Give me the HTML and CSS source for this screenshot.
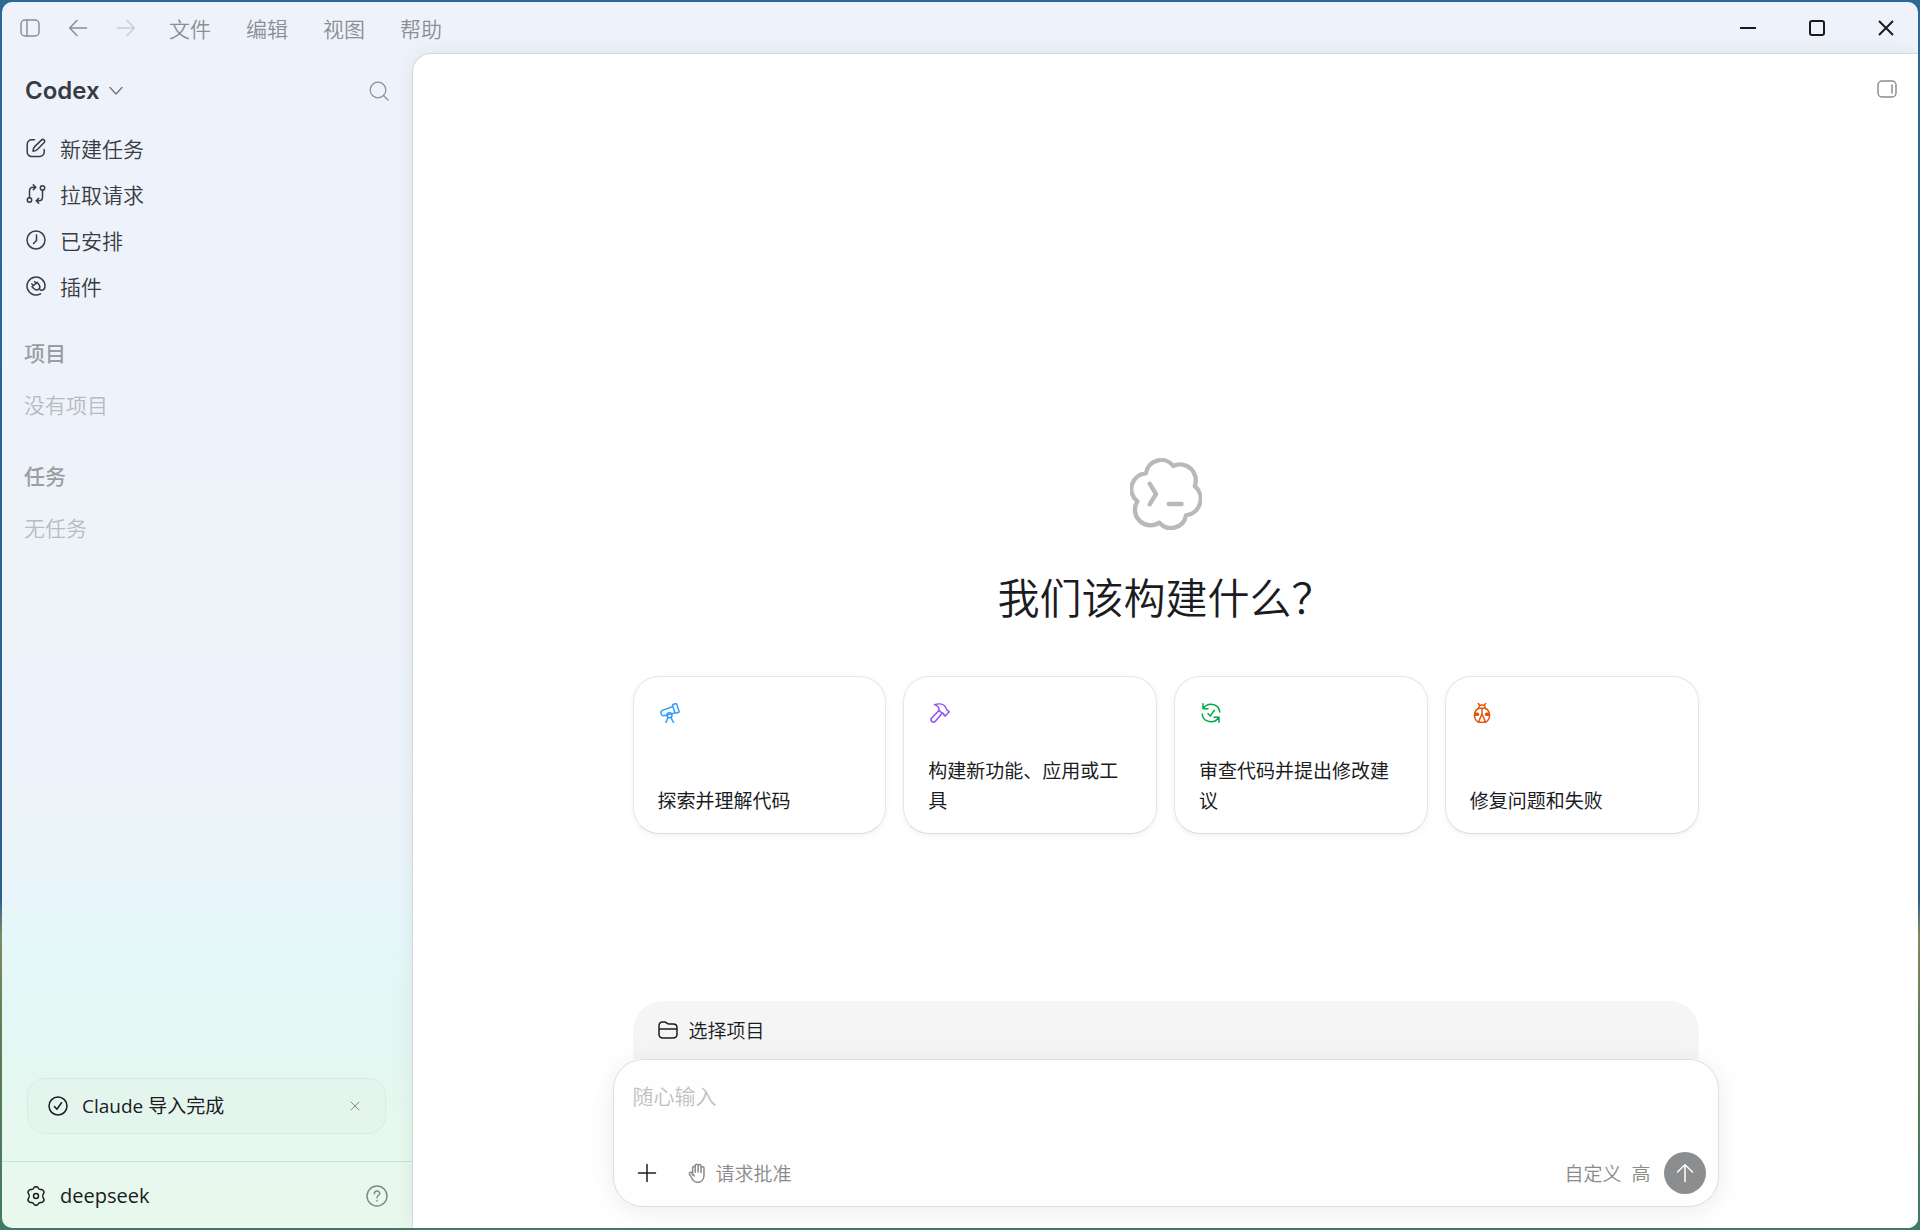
FILE: index.html
```html
<!DOCTYPE html>
<html lang="zh-CN">
<head>
    <meta charset="UTF-8">
    <meta name="viewport" content="width=device-width, initial-scale=1.0">
    <title>Codex</title>
    <link rel="stylesheet" href="styles.css">
</head>
<body>
<div class="window">

    <header class="titlebar">
        <button class="icon-btn" aria-label="切换边栏">
            <svg class="icon" viewBox="0 0 20 20"><rect x="1" y="2" width="18" height="16" rx="4"/><path d="M7 2v16"/></svg>
        </button>
        <button class="icon-btn" aria-label="后退">
            <svg class="icon" viewBox="0 0 20 20"><path d="M18.500 10H2M9 2.500 1.700 10 9 17.500"/></svg>
        </button>
        <button class="icon-btn faded" aria-label="前进">
            <svg class="icon" viewBox="0 0 20 20"><path d="M1.500 10H18M11 2.500 18.300 10 11 17.500"/></svg>
        </button>
        <nav class="menu">
            <button>文件</button>
            <button>编辑</button>
            <button>视图</button>
            <button>帮助</button>
        </nav>
        <div class="window-controls">
            <button aria-label="最小化"><svg viewBox="0 0 16 16"><path d="M0 8h16"/></svg></button>
            <button aria-label="最大化"><svg viewBox="0 0 16 16"><rect x="1" y="1" width="14" height="14" rx="2"/></svg></button>
            <button aria-label="关闭"><svg viewBox="0 0 16 16"><path d="M1 1l14 14M15 1 1 15"/></svg></button>
        </div>
    </header>

    <div class="body">
        <aside class="sidebar">
            <div class="brand-row">
                <button class="brand">Codex
                    <svg class="chevron" viewBox="0 0 14 10"><path d="M1 1.500 7 8l6-6.500"/></svg>
                </button>
                <button class="icon-btn search" aria-label="搜索">
                    <svg class="icon thin" viewBox="0 0 20 20"><circle cx="9" cy="9" r="7.800"/><path d="m14.500 14.500 4.500 4.500"/></svg>
                </button>
            </div>

            <nav class="nav">
                <a href="#">
                    <svg class="icon" viewBox="0 0 20 20"><path d="M8.500 1.800H6A4.500 4.500 0 0 0 1.200 6.300V14A4.500 4.500 0 0 0 5.700 18.600H13.500A4.500 4.500 0 0 0 18.200 14V11.500"/><path d="M7 13.200c0-2 .5-3.400 1.700-4.600L15.600 1.900c1.700-1.500 4 .7 2.600 2.500L11.600 11.300C10.300 12.600 9 13.200 7 13.200z"/></svg>
                    新建任务
                </a>
                <a href="#">
                    <svg class="icon" viewBox="0 0 20 20"><circle cx="3.500" cy="16" r="2.200"/><circle cx="16.500" cy="4" r="2.200"/><path d="M3.500 13.800V7c0-2.300 1.200-3.800 3.500-3.800h2.500M7.300.8l2.500 2.400-2.500 2.400M16.500 6.200V13c0 2.300-1.200 3.800-3.500 3.800h-2.500M12.700 14.400l-2.500 2.400 2.500 2.400"/></svg>
                    拉取请求
                </a>
                <a href="#">
                    <svg class="icon" viewBox="0 0 20 20"><circle cx="10" cy="10" r="9"/><path d="M10.500 5v5.500l-3 3"/></svg>
                    已安排
                </a>
                <a href="#">
                    <svg class="icon" viewBox="0 0 20 20"><path d="M14.500 17.800A9 9 0 1 1 19 10c0 4.800-4.500 5.400-5.600 2.600"/><path d="M6 10.800 11.200 6.400l2 2.600c1.700 2.300-.4 5.600-3.400 4.800C8.300 13.400 7.200 12.200 6 10.800zM7.300 9.600 5.900 7.900M10 7.400 8.700 5.700"/></svg>
                    插件
                </a>
            </nav>

            <section class="group">
                <h2>项目</h2>
                <p>没有项目</p>
            </section>
            <section class="group">
                <h2>任务</h2>
                <p>无任务</p>
            </section>

            <div class="toast">
                <svg class="icon" viewBox="0 0 20 20"><circle cx="10" cy="10" r="9"/><path d="m6.500 10.500 2.400 2.700 4.600-6.500"/></svg>
                <span>Claude 导入完成</span>
                <button class="toast-close" aria-label="关闭通知">
                    <svg viewBox="0 0 10 10"><path d="M1 1l8 8M9 1 1 9"/></svg>
                </button>
            </div>

            <footer class="account">
                <a href="#">
                    <svg class="icon" viewBox="0 0 20 20"><path d="M7.600 2.200c.9-2 3.900-2 4.800 0 .4.900 1.300 1.400 2.300 1.300 2.500-.3 4.200 2.300 2.700 4.400-.8 1-.8 3.200 0 4.200 1.500 2.100-.2 4.700-2.700 4.400-1-.1-1.900.4-2.300 1.300-.9 2-3.900 2-4.800 0-.4-.9-1.300-1.400-2.300-1.300-2.500.3-4.200-2.300-2.700-4.400.8-1 .8-3.200 0-4.200C1.100 5.800 2.800 3.200 5.300 3.500c1 .1 1.900-.4 2.300-1.300z"/><circle cx="10" cy="10" r="2.500"/></svg>
                    deepseek
                </a>
                <button class="icon-btn help" aria-label="帮助">
                    <svg class="icon" viewBox="0 0 22 22"><circle cx="11" cy="11" r="10"/><path d="M8.300 8.700c0-3.500 5.400-3.500 5.400-.2 0 2-2.700 2-2.700 4.200"/><path d="M11 15.400v.6"/></svg>
                </button>
            </footer>
        </aside>

        <main class="main">
            <div class="main-top">
                <button class="icon-btn" aria-label="切换侧面板">
                    <svg class="icon" viewBox="0 0 20 20"><rect x="1" y="2" width="18" height="16" rx="4"/><path d="M15 6v8"/></svg>
                </button>
            </div>

            <div class="hero">
                <svg class="logo" viewBox="0 0 216 216">
                    <path d="M48 46A46 46 0 0 1 130 24 47 47 0 0 1 194 84 50 50 0 0 1 168 172 46 46 0 0 1 88 194 47 47 0 0 1 22 130 47 47 0 0 1 48 46z"/>
                    <path class="prompt" d="m59 77 19 31-19 31M116 138h39"/>
                </svg>
                <h1>我们该构建什么？</h1>
                <div class="cards">
                    <button class="card">
                        <svg class="icon blue" viewBox="0 0 20 20"><path d="M12.300 3.700 2.400 7.400C.9 8 .6 9 1.100 10.600c.6 1.900 1.400 2.500 3 2.100L14.500 10M13.700 1.200l1.700-.5c.7-.2 1.200.1 1.400.7l2.200 6.800c.2.700-.1 1.200-.7 1.400l-2 .5c-.7.2-1.200-.1-1.400-.7L12.600 2.800c-.3-.8.300-1.300 1.100-1.600z"/><circle cx="9.500" cy="12.300" r="2.500"/><path d="m8 14.600-2.200 4.900M11 14.600l2.500 4.900"/></svg>
                        <span>探索并理解代码</span>
                    </button>
                    <button class="card">
                        <svg class="icon purple" viewBox="0 0 20 20"><path d="M4.500 1.600C9 .2 14.500.6 16.200 5.600c.3 1 .7 1.800 1.500 1.700l1.500 1.400-4 4.400-1.500-1.500c.2-1.200-.4-1.600-1.700-1.500L9 7.400c.3-2.700-1.500-4.800-4.500-5.800z"/><path d="M9 7.400 1.700 15c-2 2.400 1 5.500 3.400 3.400L12 10.600"/></svg>
                        <span>构建新功能、应用或工具</span>
                    </button>
                    <button class="card">
                        <svg class="icon green" viewBox="0 0 20 20"><path d="M2 .8v5h5M2.300 5.500C6.500-1 17.800 0 18.800 9M18 19.200v-5h-5M17.700 14.500C13.500 21 2.200 20 1.200 11"/><path d="m7 10.500 2.300 2.600 4-5.800"/></svg>
                        <span>审查代码并提出修改建议</span>
                    </button>
                    <button class="card">
                        <svg class="icon orange" viewBox="0 0 20 20"><path d="M7 5.200C2.600 6.600 1.500 12 3.300 16c.7 1.500 1.700 2.600 3 3.200L10 11l3.700 8.200c1.300-.6 2.300-1.700 3-3.200C18.500 12 17.400 6.600 13 5.200M6.500 5.200h7M10 5.200V11M6.800 5c-.3-4 6.700-4 6.400 0M7.500 2 6.300.4M12.500 2 13.700.4M6.500 18.800c2 .9 5 .9 7 0"/><path class="spot" d="M3 9.500h2.500a1.800 1.800 0 0 1 0 3.600H2.600zM17 9.500h-2.500a1.800 1.800 0 0 0 0 3.600h2.900z"/></svg>
                        <span>修复问题和失败</span>
                    </button>
                </div>
            </div>

            <div class="composer-wrap">
                <button class="project-bar">
                    <svg class="icon" viewBox="0 0 20 20"><path d="M1 6c0-2.600 1-4 3.600-4h1.700c1.500 0 2 .6 2.800 1.300.5.500 1 .7 1.800.7h4.300C18 4 19 5.300 19 7.500V14c0 2.800-1.200 4-4 4H5c-2.800 0-4-1.200-4-4zM1 9h18"/></svg>
                    选择项目
                </button>
                <form class="composer">
                    <textarea rows="1" aria-label="随心输入" placeholder="随心输入"></textarea>
                    <div class="composer-actions">
                        <button type="button" class="add" aria-label="添加">
                            <svg class="icon" viewBox="0 0 20 20"><path d="M10 1.500v17M1.500 10h17"/></svg>
                        </button>
                        <button type="button" class="approval">
                            <svg class="icon" viewBox="0 0 20 20"><path d="M4.600 12V4.700c0-1.700 2.600-1.700 2.600 0V9.200M7.200 5V2.600c0-1.900 2.900-1.900 2.900 0V9M10.100 3c0-1.900 2.900-1.900 2.900 0v6.500M13 5c0-1.800 3-1.800 3 0v7c0 4.600-2.600 7.300-6 7.300-3.300 0-4.900-1.300-6.300-4.300L1.700 11.300c-.8-1.500.9-2.900 2.200-1.400l2.300 3"/></svg>
                            请求批准
                        </button>
                        <button type="button" class="model"><span>自定义</span><span>高</span></button>
                        <button type="submit" class="send" aria-label="发送">
                            <svg class="icon" viewBox="0 0 20 20"><path d="M10 18.500V2M2.500 9 10 1.700 17.500 9"/></svg>
                        </button>
                    </div>
                </form>
            </div>
        </main>
    </div>

</div>
</body>
</html>
```

FILE: styles.css
```css
* {
    box-sizing: border-box;
}
body {
    margin: 0;
    height: 100vh;
    padding: 2px;
    font-family: "Noto Sans CJK SC", "Noto Sans", sans-serif;
    font-size: 21px;
    font-weight: 350; /* DemiLight */
    line-height: 30px;
    color: #1a1c1f;
    background: linear-gradient(#2d6795, #2b5f8c 73%, #7f8a60 76%, #5f7a55 85%, #3f7a68);
}
button, textarea {
    font: inherit;
    color: inherit;
    background: none;
    border: none;
    padding: 0;
    margin: 0;
}
button {
    cursor: pointer;
}
a {
    color: inherit;
    text-decoration: none;
}
svg {
    display: block;
    flex: none;
    fill: none;
    stroke: currentColor;
    stroke-width: 1.5;
    stroke-linecap: round;
    stroke-linejoin: round;
}
.icon {
    width: 20px;
    height: 20px;
}
.thin {
    stroke-width: 1.2;
}

.window {
    display: flex;
    flex-direction: column;
    height: 100%;
    border-radius: 10px;
    overflow: hidden;
    background: linear-gradient(#eef3fb 0%, #eef3fb 35%, #eef3f9 48%, #edf3fb 60%, #ebf4f8 68%, #e8f5fa 73%, #e3f8f7 79%, #e3f8f2 86%, #e7f8ee 93%, #e8f8ed 100%);
}

/* title bar */
.titlebar {
    display: flex;
    align-items: center;
    height: 52px;
    padding-left: 18px;
    color: #8b8e93;
}
.icon-btn {
    display: flex;
    color: #8b8e93;
}
.titlebar .icon-btn {
    margin-right: 28px;
}
.titlebar .faded {
    color: #c9ccd2;
    margin-right: 33px;
}
.menu {
    display: flex;
    gap: 35px;
}
.window-controls {
    display: flex;
    gap: 53px;
    margin-left: auto;
    padding-right: 24px;
    color: #1b1b1b;
}
.window-controls svg {
    width: 16px;
    height: 16px;
    stroke-width: 2;
    stroke-linecap: butt;
}

.body {
    display: flex;
    flex: 1;
    min-height: 0;
}

/* sidebar */
.sidebar {
    display: flex;
    flex-direction: column;
    width: 411px;
    flex: none;
}
.brand-row {
    display: flex;
    align-items: center;
    justify-content: space-between;
    padding: 22px 24px 0 23px;
}
.brand {
    display: flex;
    align-items: center;
    gap: 9px;
    font-family: Inter, "Liberation Sans", sans-serif;
    font-size: 24px;
    font-weight: 600;
    color: #383b3f;
}
.chevron {
    width: 14px;
    height: 10px;
    color: #77797e;
}
.nav {
    padding: 19px 24px 0;
}
.nav a, .account a {
    display: flex;
    align-items: center;
    gap: 14px;
    height: 46px;
}
.nav a {
    color: #383b3f;
}
.account a {
    font-family: "Open Sans", "Noto Sans CJK SC", sans-serif;
    font-size: 20px;
    font-weight: 400;
}
.group {
    padding: 28px 22px 0;
}
.group h2, .group p {
    margin: 0;
    font-size: 21px;
}
.group h2 {
    font-weight: 500;
    color: #9a9da2;
}
.group p {
    padding: 22px 0 13px;
    color: #b8bbc0;
}
.toast {
    display: flex;
    align-items: center;
    gap: 14px;
    height: 56px;
    margin: auto 27px 27px 25px;
    padding: 0 25px 0 20px;
    border: 1px solid #d8ebe4;
    border-radius: 18px;
    background: #e4f5ee;
    font-family: "Open Sans", "Noto Sans CJK SC", sans-serif;
    font-size: 19px;
    font-weight: 400;
}
.toast-close {
    margin-left: auto;
    color: #7f8a87;
}
.toast-close svg {
    width: 10px;
    height: 10px;
    stroke-width: 1;
}
.account {
    display: flex;
    align-items: center;
    justify-content: space-between;
    height: 67px;
    padding: 2px 25px 0 24px;
    border-top: 1px solid #cddfd7;
}
.help {
    color: #808a86;
}
.help .icon {
    width: 22px;
    height: 22px;
}

/* main panel */
.main {
    display: flex;
    flex-direction: column;
    flex: 1;
    min-width: 0;
    background: #fff;
    border-radius: 18px 0 0 0;
    box-shadow: 0 0 0 1px #d3d8df, 0 0 22px rgba(0, 0, 0, 0.07);
}
.main-top {
    display: flex;
    justify-content: flex-end;
    padding: 25px 21px 0;
}
.hero {
    display: flex;
    flex-direction: column;
    align-items: center;
    justify-content: flex-end;
    flex: 1;
    padding: 0 40px 167px;
}
.logo {
    width: 72px;
    height: 72px;
    color: #b9b9b9;
    stroke-width: 13;
}
h1 {
    margin: 35px 0 49px;
    font-size: 42px;
    font-weight: 350;
    line-height: 62px;
}
.cards {
    display: grid;
    grid-template-columns: repeat(4, 1fr);
    gap: 17px;
    width: 100%;
    max-width: 1066px;
}
.card {
    display: flex;
    flex-direction: column;
    justify-content: space-between;
    height: 158px;
    padding: 26px 24px 18px;
    border: 1px solid #e6e6e6;
    border-bottom-color: #dcdcdc;
    border-radius: 26px;
    background: #fff;
    box-shadow: 0 2px 6px rgba(0, 0, 0, 0.05);
    font-size: 19px;
    font-weight: 400;
    text-align: left;
}
.card .icon {
    margin-left: 2px;
}
.blue { color: #339cff; }
.purple { color: #924ff7; }
.green { color: #04a84b; }
.orange { color: #e25507; }
.spot {
    fill: currentColor;
    stroke: none;
}

/* composer */
.composer-wrap {
    width: 100%;
    max-width: 1186px;
    margin: 0 auto;
    padding: 0 40px 21px;
}
.project-bar {
    display: flex;
    align-items: center;
    gap: 11px;
    width: calc(100% - 40px);
    height: 58px;
    margin: 0 20px;
    padding: 0 25px;
    border-radius: 30px 30px 0 0;
    background: #f5f5f5;
    font-size: 19px;
}
.composer {
    display: flex;
    flex-direction: column;
    justify-content: space-between;
    height: 148px;
    padding: 20px 12px 12px 19px;
    border: 1px solid #dedede;
    border-radius: 30px;
    background: #fefefe;
    box-shadow: 0 4px 26px rgba(0, 0, 0, 0.08);
}
textarea {
    display: block;
    width: 100%;
    resize: none;
    outline: none;
}
textarea::placeholder {
    color: #c0c0c0;
    opacity: 1;
}
.composer-actions {
    display: flex;
    align-items: center;
    font-size: 19px;
    color: #8a8a8a;
}
.add {
    padding: 4px;
    color: #1a1c1f;
}
.approval {
    display: flex;
    align-items: center;
    gap: 8px;
    margin-left: 27px;
}
.model {
    display: flex;
    gap: 10px;
    margin: 0 13px 0 auto;
}
.send {
    display: grid;
    place-items: center;
    width: 42px;
    height: 42px;
    border-radius: 50%;
    background: #8c8d8e;
    color: #fff;
}
```
